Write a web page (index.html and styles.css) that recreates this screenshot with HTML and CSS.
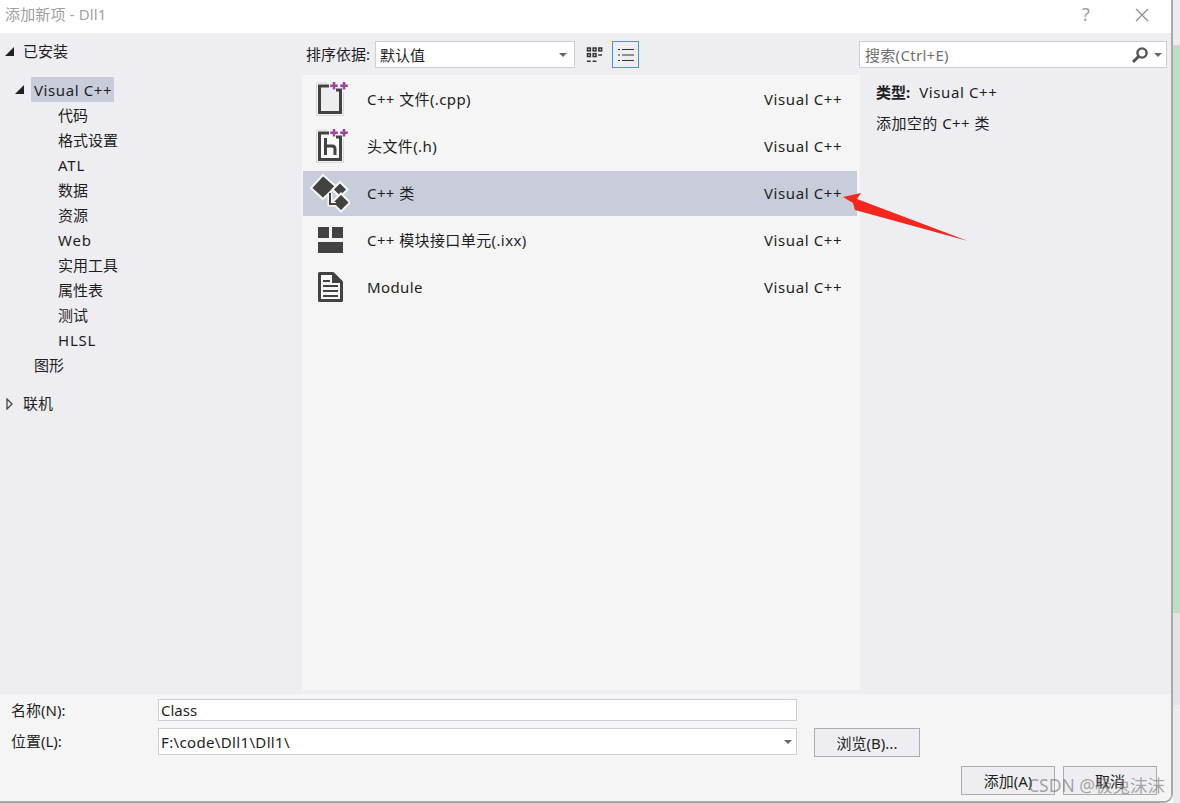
FILE: index.html
```html
<!DOCTYPE html>
<html lang="zh-CN">
<head>
  <meta charset="UTF-8">
  <title>添加新项 - Dll1</title>
  <link rel="stylesheet" href="styles.css">
</head>
<body>
  <div class="page">
    <div class="dialog">
      <!-- 标题栏 -->
      <div class="titlebar">
        <span class="title">添加新项 - Dll1</span>
        <span class="help">?</span>
        <svg class="close" width="14" height="14" viewBox="0 0 14 14"><path d="M1 1L13 13M13 1L1 13" stroke="#8a8a8a" stroke-width="1.1" fill="none"/></svg>
      </div>

      <div class="main">
        <!-- 左侧树 -->
        <div class="tree">
          <div class="node node-root">
            <svg class="arrow" width="9" height="9" viewBox="0 0 9 9"><path d="M9 0V9H0Z" fill="#222"/></svg>
            <span>已安装</span>
          </div>
          <div class="node node-vc">
            <svg class="arrow" width="9" height="9" viewBox="0 0 9 9"><path d="M9 0V9H0Z" fill="#222"/></svg>
            <span class="node-selected">Visual C++</span>
          </div>
          <div class="node leaf">代码</div>
          <div class="node leaf">格式设置</div>
          <div class="node leaf leaf-latin">ATL</div>
          <div class="node leaf">数据</div>
          <div class="node leaf">资源</div>
          <div class="node leaf leaf-latin">Web</div>
          <div class="node leaf">实用工具</div>
          <div class="node leaf">属性表</div>
          <div class="node leaf">测试</div>
          <div class="node leaf leaf-latin">HLSL</div>
          <div class="node node-mid">图形</div>
          <div class="node node-online">
            <svg class="arrow" width="7" height="12" viewBox="0 0 7 12"><path d="M1 1L6 6L1 11Z" fill="none" stroke="#444" stroke-width="1.3"/></svg>
            <span>联机</span>
          </div>
        </div>

        <!-- 中间列表 -->
        <div class="center">
          <div class="toolbar">
            <span class="sort-label">排序依据:</span>
            <div class="select">
              <span>默认值</span>
              <span class="caret"></span>
            </div>
            <button class="view-btn view-btn-grid">
              <svg width="18" height="18" viewBox="0 0 18 18" fill="none" stroke="#333" stroke-width="1.6">
                <rect x="1.6" y="1.6" width="3" height="3"/><rect x="7.6" y="1.6" width="3" height="3"/><rect x="13.6" y="1.6" width="3" height="3"/>
                <rect x="1.6" y="7.6" width="3" height="3"/><rect x="7.6" y="7.6" width="3" height="3"/><path d="M13 9H17"/>
                <path d="M1 15.5H5M7 15.5H11"/>
              </svg>
            </button>
            <button class="view-btn view-btn-active">
              <svg width="18" height="16" viewBox="0 0 18 16" fill="none" stroke="#333" stroke-width="1.2">
                <path d="M1 2.5H3M5 2.5H17M1 8H3M5 8H17M1 13.5H3M5 13.5H17"/>
              </svg>
            </button>
          </div>

          <div class="list">
            <div class="row">
              <svg class="row-icon" width="40" height="40" viewBox="0 0 40 40" fill="none">
                <path d="M6.5 35.5H33.5V12M6.5 35.5V3H17" stroke="#d8d8d8" stroke-width="1"/>
                <path d="M19 6H9.5V32.5H30.5V14M26 10H30.5V14" fill="#eeeeee" stroke="#424242" stroke-width="3"/>
                <path d="M24 2V9.5M20.2 5.7H27.8M34 2V9.5M30.2 5.7H37.8" stroke="#a0449c" stroke-width="2.6"/>
              </svg>
              <span class="row-name">C++ 文件(.cpp)</span>
              <span class="row-type">Visual C++</span>
            </div>
            <div class="row">
              <svg class="row-icon" width="40" height="40" viewBox="0 0 40 40" fill="none">
                <path d="M6.5 35.5H33.5V12M6.5 35.5V3H17" stroke="#d8d8d8" stroke-width="1"/>
                <path d="M19 6H9.5V32.5H30.5V14M26 10H30.5V14" fill="#f8f8f8" stroke="#424242" stroke-width="3"/>
                <path d="M15.5 11V28M15.5 19H22Q25 19 25 22V28" stroke="#424242" stroke-width="3"/>
                <path d="M24 2V9.5M20.2 5.7H27.8M34 2V9.5M30.2 5.7H37.8" stroke="#a0449c" stroke-width="2.6"/>
              </svg>
              <span class="row-name">头文件(.h)</span>
              <span class="row-type">Visual C++</span>
            </div>
            <div class="row row-selected">
              <svg class="row-icon" width="40" height="40" viewBox="0 0 40 40">
                <path d="M20 19V30H27" fill="none" stroke="#f6f6f6" stroke-width="5"/>
                <path d="M1 14L13 1L26 12.5L13 25Z" fill="#424242" stroke="#f6f6f6" stroke-width="2"/>
                <path d="M22.5 15.5L30 8L37.5 15.5L30 23Z" fill="#424242" stroke="#f6f6f6" stroke-width="2"/>
                <path d="M22 28.5L31 19.5L40 28.5L31 37.5Z" fill="#424242" stroke="#f6f6f6" stroke-width="2"/>
                <path d="M20 19V30H26" fill="none" stroke="#f6f6f6" stroke-width="4"/>
                <path d="M20 19V30H26" fill="none" stroke="#424242" stroke-width="2"/>
              </svg>
              <span class="row-name">C++ 类</span>
              <span class="row-type">Visual C++</span>
            </div>
            <div class="row">
              <svg class="row-icon" width="40" height="40" viewBox="0 0 40 40" fill="#424242">
                <rect x="8" y="6" width="11" height="11"/>
                <rect x="22" y="6" width="11" height="11"/>
                <rect x="8" y="21" width="25" height="11"/>
              </svg>
              <span class="row-name">C++ 模块接口单元(.ixx)</span>
              <span class="row-type">Visual C++</span>
            </div>
            <div class="row">
              <svg class="row-icon" width="40" height="40" viewBox="0 0 40 40" fill="none">
                <path d="M9.5 5.5H23L31.5 14V32.5H9.5Z" fill="#f8f8f8" stroke="#424242" stroke-width="3" stroke-linejoin="round"/>
                <path d="M23 5.5V14H31.5" fill="#424242" stroke="#424242" stroke-width="2"/>
                <path d="M13 13H20M13 18H28M13 23H28M13 28H28" stroke="#424242" stroke-width="2"/>
              </svg>
              <span class="row-name">Module</span>
              <span class="row-type">Visual C++</span>
            </div>
          </div>
        </div>

        <!-- 右侧信息 -->
        <div class="side">
          <div class="search">
            <span class="search-hint">搜索(Ctrl+E)</span>
            <svg width="18" height="18" viewBox="0 0 18 18" fill="none" stroke="#555" class="search-icon">
              <circle cx="11" cy="7" r="4.6" stroke-width="2.4"/>
              <path d="M7.5 10.5L2 16" stroke-width="3"/>
            </svg>
            <span class="caret"></span>
          </div>
          <div class="details">
            <p class="detail-type"><b>类型:</b><span class="detail-value">Visual C++</span></p>
            <p class="detail-text">添加空的 C++ 类</p>
          </div>
        </div>
      </div>

      <!-- 底部表单 -->
      <div class="footer">
        <div class="field field-name">
          <label>名称(N):</label>
          <div class="input input-name">Class</div>
        </div>
        <div class="field field-path">
          <label>位置(L):</label>
          <div class="input input-path"><span class="path-text">F:\code\Dll1\Dll1\</span><span class="caret"></span></div>
          <button class="btn btn-browse">浏览(B)...</button>
        </div>
        <div class="actions">
          <button class="btn">添加(A)</button>
          <button class="btn">取消</button>
        </div>
      </div>
    </div>

    <!-- 后面窗口露出的部分 -->
    <div class="behind">
      <div class="behind-top"></div>
      <div class="behind-green"></div>
      <div class="behind-grey"></div>
      <div class="behind-bottom"></div>
    </div>
  </div>

  <!-- 红色箭头标注 -->
  <svg class="annotation" width="140" height="60" viewBox="0 0 140 60">
    <path d="M3 17L21 13L17 19L128 61L15 30L13 23Z" fill="#f5261b"/>
  </svg>

  <div class="watermark">CSDN @极兔沫沫</div>
</body>
</html>
```

FILE: styles.css
```css
* {
  box-sizing: border-box;
}

html, body {
  margin: 0;
  padding: 0;
  overflow: hidden;
  height: 803px;
  background: #fff;
  font-family: "Noto Sans", "Noto Sans CJK SC", sans-serif;
  font-size: 15px;
  color: #1e1e1e;
}

.page {
  display: flex;
  width: 1180px;
  height: 803px;
}

/* 对话框 */
.dialog {
  width: 1173px;
  height: 803px;
  display: flex;
  flex-direction: column;
  background: #f5f5f5;
  border-right: 2px solid #a9a9a9;
  border-bottom: 2px solid #a9a9a9;
  border-bottom-right-radius: 9px;
  overflow: hidden;
}

.titlebar {
  height: 33px;
  flex: none;
  background: #fff;
  display: flex;
  align-items: center;
  padding-left: 5px;
  padding-bottom: 6px;
  color: #a0a0a0;
}

.title {
  flex: 1;
  letter-spacing: 0.15px;
}

.help {
  width: 57px;
  padding-left: 4px;
  font-size: 18px;
}

.close {
  margin-right: 22px;
  margin-top: 3px;
}

.main {
  height: 661px;
  flex: none;
  display: flex;
  background: #eeeef2;
}

/* 树 */
.tree {
  width: 302px;
  flex: none;
  padding-top: 6px;
}

.node {
  height: 25px;
  line-height: 25px;
  white-space: nowrap;
  display: flex;
  align-items: center;
}

.node-root {
  padding-left: 5px;
  height: 25px;
  margin-bottom: 13px;
}

.node-root .arrow {
  margin-right: 9px;
}

.node-vc {
  padding-left: 15px;
}

.node-vc .arrow {
  margin-right: 7px;
}

.node-selected {
  background: #c9ccda;
  padding: 0 3px;
  height: 25px;
  width: 83px;
  line-height: 27px;
  letter-spacing: 0.6px;
}

.leaf {
  padding-left: 58px;
  padding-top: 2px;
}

.leaf-latin {
  letter-spacing: 0.8px;
}

.node-mid {
  padding-left: 34px;
  padding-top: 2px;
}

.node-online {
  padding-left: 6px;
  padding-top: 2px;
  margin-top: 13px;
}

.node-online .arrow {
  margin-right: 10px;
}

/* 中间 */
.center {
  width: 558px;
  flex: none;
  display: flex;
  flex-direction: column;
}

.toolbar {
  height: 42px;
  flex: none;
  display: flex;
  align-items: flex-start;
  padding: 8px 0 0 4px;
}

.sort-label {
  width: 69px;
  line-height: 27px;
}

.select {
  width: 200px;
  height: 27px;
  background: #fff;
  border: 1px solid #ccced9;
  display: flex;
  align-items: center;
  justify-content: space-between;
  padding: 0 7px 0 4px;
}

.caret {
  width: 0;
  height: 0;
  border-left: 4px solid transparent;
  border-right: 4px solid transparent;
  border-top: 4px solid #666;
}

.view-btn {
  width: 27px;
  height: 27px;
  padding: 0;
  background: transparent;
  border: 1px solid transparent;
  display: flex;
  align-items: center;
  justify-content: center;
}

.view-btn-grid {
  width: 19px;
  margin-left: 10px;
  margin-right: 8px;
}

.view-btn-active {
  border-color: #3399ff;
}

.list {
  height: 615px;
  background: #f5f5f5;
  padding-top: 2px;
  display: flex;
  flex-direction: column;
  gap: 2px;
}

.row {
  height: 45px;
  flex: none;
  margin: 0 3px 0 1px;
  display: flex;
  align-items: center;
  padding-left: 7px;
}

.row-selected {
  background: #c9ccda;
}

.row-icon {
  flex: none;
}

.row-name {
  margin-left: 17px;
  flex: 1;
  padding-bottom: 2px;
  letter-spacing: 0.4px;
}

.row-type {
  width: 93px;
  padding-bottom: 2px;
  letter-spacing: 0.6px;
}

/* 右侧 */
.side {
  flex: 1;
  min-width: 0;
}

.search {
  width: 308px;
  height: 27px;
  margin: 8px 0 0 -1px;
  background: #fff;
  border: 1px solid #ccced9;
  display: flex;
  align-items: center;
  padding: 0 4px 0 5px;
}

.search-hint {
  flex: 1;
  color: #717171;
  letter-spacing: 0.3px;
}

.search-icon {
  margin-right: 5px;
}

.details {
  padding: 14px 0 0 16px;
}

.details p {
  margin: 0 0 11px;
  line-height: 20px;
}

.detail-type b {
  margin-right: 9px;
}

.detail-value {
  letter-spacing: 0.6px;
}

.detail-text {
  letter-spacing: 0.45px;
}

/* 底部 */
.footer {
  flex: 1;
  background: #f5f5f5;
  padding: 5px 0 0 11px;
  display: flex;
  flex-direction: column;
}

.field {
  display: flex;
  align-items: flex-start;
}

.field label {
  width: 147px;
  flex: none;
  line-height: 22px;
}

.field-path {
  margin-top: 7px;
}

.field-path label {
  line-height: 27px;
}

.input {
  width: 639px;
  background: #fff;
  border: 1px solid #ccced9;
  padding-left: 2px;
  display: flex;
  align-items: center;
  justify-content: space-between;
}

.input-name {
  height: 22px;
}

.input-path {
  height: 27px;
  padding-right: 4px;
}

.path-text {
  letter-spacing: 0.35px;
}

.btn {
  width: 94px;
  height: 29px;
  padding: 0;
  background: #eeeef2;
  border: 1px solid #acacac;
  font: inherit;
  color: inherit;
}

.btn-browse {
  width: 106px;
  margin-left: 17px;
}

.actions {
  display: flex;
  gap: 8px;
  margin: 9px 0 0 950px;
}

/* 后面的窗口 */
.behind {
  flex: 1;
  display: flex;
  flex-direction: column;
}

.behind-top {
  height: 47px;
  background: #ececf0;
  border-bottom: 2px solid #d2d2de;
}

.behind-green {
  height: 566px;
  background: #bcdfc3;
}

.behind-grey {
  height: 92px;
  background: #e3e3e8;
}

.behind-bottom {
  flex: 1;
  background: #ececec;
}

/* 标注与水印盖在内容上面 */
.annotation {
  position: absolute;
  left: 840px;
  top: 180px;
  overflow: visible;
}

.watermark {
  position: absolute;
  left: 1028px;
  top: 773px;
  font-size: 17.5px;
  line-height: 24px;
  color: rgba(120, 120, 120, 0.65);
  white-space: nowrap;
}
```
